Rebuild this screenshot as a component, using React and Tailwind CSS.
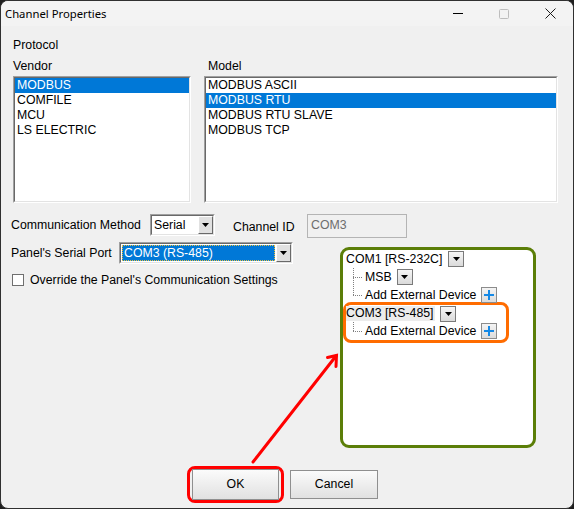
import React from 'react'

const sunkenOuter = 'border border-t-[#a0a0a0] border-l-[#a0a0a0] border-r-white border-b-white'
const sunkenInner = 'border border-t-[#696969] border-l-[#696969] border-r-[#e3e3e3] border-b-[#e3e3e3]'

const Arrow = ({ size = 7 }) => (
  <svg width={size} height="4" viewBox="0 0 7 4">
    <path d="M0 0h7L3.5 4z" fill="#000" />
  </svg>
)

const ComboButton = () => (
  <div className="flex h-full w-[15px] items-center justify-center border border-t-white border-l-white border-r-[#696969] border-b-[#696969] bg-[#e1e1e1]">
    <Arrow />
  </div>
)

const ListBox = ({ items, selected, width }) => (
  <div className={`${sunkenOuter} h-[127px]`} style={{ width }}>
    <div className={`${sunkenInner} h-full bg-white`}>
      {items.map((item) => (
        <div
          key={item}
          className={`h-[15px] pl-[2px] leading-[15px] ${item === selected ? 'bg-[#0078d7] text-white' : ''}`}
        >
          {item}
        </div>
      ))}
    </div>
  </div>
)

const TreeDrop = ({ className = '' }) => (
  <div className={`flex h-[16px] w-[16px] items-center justify-center border border-[#7a7a7a] bg-gradient-to-b from-[#f6f6f6] to-[#dadada] ${className}`}>
    <Arrow />
  </div>
)

const PlusButton = () => (
  <div className="ml-[5px] flex h-[16px] w-[16px] items-center justify-center border border-[#8c8c8c] bg-gradient-to-b from-[#f4f4f4] to-[#dcdcdc]">
    <svg width="10" height="10" viewBox="0 0 10 10">
      <path d="M5 0v10M0 5h10" stroke="#1589e6" strokeWidth="2" />
    </svg>
  </div>
)

// dotted tree connector, x = offset of the vertical line
const Connector = ({ width, x, height = 18, last }) => (
  <svg width={width} height={height} className="shrink-0">
    <line x1={x + 0.5} y1="0" x2={x + 0.5} y2={last ? height / 2 : height} stroke="#808080" strokeDasharray="1 1" />
    <line x1={x} y1={Math.floor(height / 2) + 0.5} x2={width - 2} y2={Math.floor(height / 2) + 0.5} stroke="#808080" strokeDasharray="1 1" />
  </svg>
)

const CaptionButton = ({ children }) => (
  <div className="flex h-full w-[46px] items-center justify-center">{children}</div>
)

const Button = ({ label, className = '' }) => (
  <button className={`flex items-center justify-center border border-[#8f8f8f] bg-gradient-to-b from-[#fbfbfb] to-[#e1e1e1] text-black ${className}`}>
    {label}
  </button>
)

export default function App() {
  return (
    <div className="relative h-[509px] w-[574px] bg-[#1e1e1e] font-['Liberation_Sans',Arial,sans-serif] text-[12.3px] text-black">
      <div className="flex h-full flex-col overflow-hidden rounded-[8px] border border-[#303030] bg-[#f0f0f0]">
        {/* Title bar */}
        <div className="flex h-[25px] shrink-0 items-center bg-[#f3f3f3]">
          <span className="pl-[4px] font-['Noto_Sans',sans-serif] text-[11.3px] leading-none">Channel Properties</span>
          <div className="ml-auto flex h-full">
            <CaptionButton>
              <svg width="10" height="1"><rect width="10" height="1" fill="#000" /></svg>
            </CaptionButton>
            <CaptionButton>
              <svg width="10" height="10"><rect x="0.5" y="0.5" width="9" height="9" rx="1" fill="none" stroke="#bdbdbd" /></svg>
            </CaptionButton>
            <CaptionButton>
              <svg width="11" height="11"><path d="M0.5 0.5l10 10M10.5 0.5l-10 10" stroke="#1a1a1a" strokeWidth="1" /></svg>
            </CaptionButton>
          </div>
        </div>

        {/* Body */}
        <div className="flex flex-1 flex-col">
          <div className="mt-[12px] h-[14px] pl-[12px] leading-[14px]">Protocol</div>

          <div className="mt-[7px] flex gap-[13px] pl-[12px]">
            <div>
              <div className="h-[14px] leading-[14px]">Vendor</div>
              <div className="mt-[3px]">
                <ListBox width={178} items={['MODBUS', 'COMFILE', 'MCU', 'LS ELECTRIC']} selected="MODBUS" />
              </div>
            </div>
            <div>
              <div className="h-[14px] pl-[4px] leading-[14px]">Model</div>
              <div className="mt-[3px]">
                <ListBox
                  width={354}
                  items={['MODBUS ASCII', 'MODBUS RTU', 'MODBUS RTU SLAVE', 'MODBUS TCP']}
                  selected="MODBUS RTU"
                />
              </div>
            </div>
          </div>

          {/* Communication method row */}
          <div className="mt-[11px] flex h-[24px] items-start">
            <div className="mt-[4px] w-[149px] pl-[10px] leading-[14px]">Communication Method</div>
            <div className={`${sunkenOuter} h-[22px] w-[65px]`}>
              <div className={`${sunkenInner} flex h-full bg-white`}>
                <span className="flex-1 pl-[2px] leading-[18px]">Serial</span>
                <ComboButton />
              </div>
            </div>
            <div className="ml-[18px] mt-[6px] w-[74px] leading-[14px]">Channel ID</div>
            <div className="h-[24px] w-[100px] border border-[#b4b4b4] bg-[#f0f0f0] pl-[3px] leading-[20px] text-[#6d6d6d]">
              COM3
            </div>
          </div>

          <div className="flex">
            <div className="mt-[4px] flex w-[339px] flex-col">
              <div className="flex h-[22px] items-center">
                <div className="w-[118px] pl-[10px]">Panel's Serial Port</div>
                <div className={`${sunkenOuter} h-[22px] w-[174px]`}>
                  <div className={`${sunkenInner} flex h-full bg-white`}>
                    <div className="m-[1px] flex-1 border border-dotted border-[#e8c040] bg-[#0078d7] pl-[1px] leading-[14px] text-white">
                      COM3 (RS-485)
                    </div>
                    <ComboButton />
                  </div>
                </div>
              </div>
              <div className="mt-[10px] flex h-[12px] items-center pl-[11px]">
                <div className="h-[12px] w-[12px] border border-[#6f6f6f] bg-white" />
                <span className="ml-[6px] leading-[14px]">Override the Panel's Communication Settings</span>
              </div>
            </div>

            {/* Device tree */}
            <div className="mt-[9px] h-[201px] w-[196px] rounded-[9px] border-[3px] border-[#5b7e08] bg-white">
              <div className="flex h-[18px] items-center pl-[3px]">
                <span>COM1 [RS-232C]</span>
                <TreeDrop className="ml-[6px]" />
              </div>
              <div className="flex h-[18px] items-center">
                <Connector width={22} x={10} />
                <span>MSB</span>
                <TreeDrop className="ml-[5px]" />
              </div>
              <div className="flex h-[18px] items-center">
                <Connector width={22} x={10} last />
                <span>Add External Device</span>
                <PlusButton />
              </div>
              <div className="mt-[-2px] w-[166px] rounded-[8px] border-[3px] border-[#ff6c00]">
                <div className="flex h-[17px] items-center">
                  <span className="bg-[#ececec] pr-[2px] leading-[15px]">COM3 [RS-485]</span>
                  <TreeDrop className="ml-[5px]" />
                </div>
                <div className="flex h-[18px] items-center">
                  <Connector width={19} x={7} last />
                  <span>Add External Device</span>
                  <PlusButton />
                </div>
              </div>
            </div>
          </div>

          {/* Buttons */}
          <div className="mt-[18px] flex items-center gap-[6px] pl-[186px]">
            <div className="flex h-[37px] w-[97px] items-center justify-center rounded-[8px] border-[3px] border-[#ff0000]">
              <Button label="OK" className="h-[31px] w-[87px]" />
            </div>
            <Button label="Cancel" className="h-[29px] w-[88px]" />
          </div>
        </div>
      </div>

      {/* red annotation arrow */}
      <svg className="pointer-events-none absolute left-0 top-0" width="574" height="509">
        <g stroke="#ff0000" strokeWidth="3" strokeLinecap="round" fill="none">
          <line x1="253" y1="462" x2="336" y2="356" />
          <path d="M327.5 357.5L336.5 355.5L336 366.5" />
        </g>
      </svg>
    </div>
  )
}
